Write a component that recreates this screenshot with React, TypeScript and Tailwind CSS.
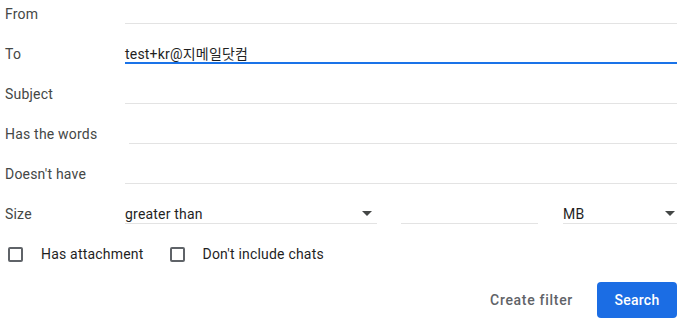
import { ReactNode } from "react";

function Arrow() {
  return (
    <svg width="10" height="5" viewBox="0 0 10 5" className="shrink-0">
      <path d="M0 0L10 0L5 5Z" fill="#444746" />
    </svg>
  );
}

function Row({ label, children }: { label: string; children: ReactNode }) {
  return (
    <div className="flex h-5 items-stretch">
      <div className="w-[125px] shrink-0 pl-[5px] leading-5 text-[#444746]">{label}</div>
      {children}
    </div>
  );
}

function Field({ value, focused, className = "" }: { value?: string; focused?: boolean; className?: string }) {
  return (
    <div
      className={`flex-1 leading-5 text-[#1f1f1f] ${
        focused ? "border-b-2 border-[#1a73e8]" : "border-b border-[#e3e3e3]"
      } ${className}`}
    >
      {value}
    </div>
  );
}

function Checkbox({ label }: { label: string }) {
  return (
    <div className="flex items-center">
      <span className="block h-[15px] w-[15px] rounded-[2px] border-2 border-[#5f6368]" />
      <span className="ml-[18px] text-[#1f1f1f]">{label}</span>
    </div>
  );
}

export default function App() {
  return (
    <div
      className="h-[323px] w-[688px] bg-white pt-1 pr-[11px] text-[14px] tracking-[0.2px]"
      style={{ fontFamily: "Roboto, 'Noto Sans CJK KR', sans-serif" }}
    >
      <div className="flex flex-col gap-5">
        <Row label="From">
          <Field />
        </Row>
        <Row label="To">
          <Field value="test+kr@지메일닷컴" focused />
        </Row>
        <Row label="Subject">
          <Field />
        </Row>
        <Row label="Has the words">
          <Field className="ml-1" />
        </Row>
        <Row label="Doesn't have">
          <Field />
        </Row>
        <Row label="Size">
          <div className="flex w-[252px] items-center justify-between border-b border-[#e3e3e3] pr-[5px] leading-5 text-[#1f1f1f]">
            <span>greater than</span>
            <Arrow />
          </div>
          <div className="ml-6 w-[137px] border-b border-[#e3e3e3]" />
          <div className="ml-[25px] flex flex-1 items-center justify-between border-b border-[#e3e3e3] pr-[2px] leading-5 text-[#1f1f1f]">
            <span>MB</span>
            <Arrow />
          </div>
        </Row>
        <div className="flex h-5 items-center pl-2">
          <Checkbox label="Has attachment" />
          <div className="ml-[26px]">
            <Checkbox label="Don't include chats" />
          </div>
        </div>
      </div>
      <div className="mt-[18px] flex items-center justify-end">
        <button className="mr-6 font-medium tracking-[0.7px] text-[#5f6368]">Create filter</button>
        <button className="h-9 w-20 rounded-[4px] bg-[#1b6de4] font-medium tracking-[0.25px] text-white">
          Search
        </button>
      </div>
    </div>
  );
}
